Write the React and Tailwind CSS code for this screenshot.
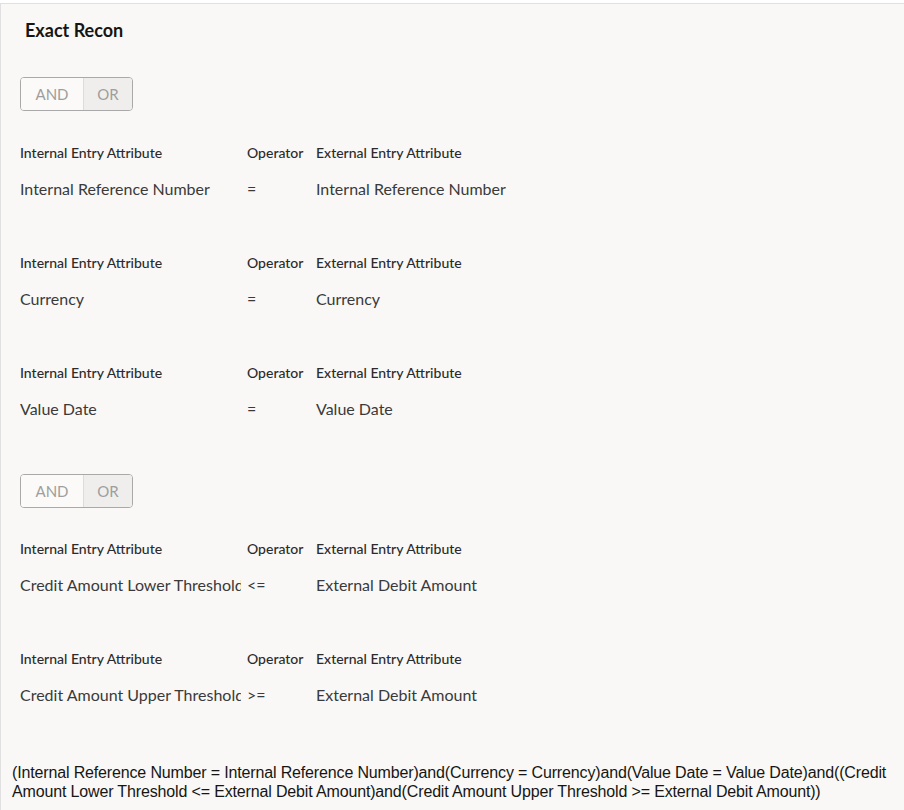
import React from "react";

const groups = [
  {
    rows: [
      ["Internal Reference Number", "=", "Internal Reference Number"],
      ["Currency", "=", "Currency"],
      ["Value Date", "=", "Value Date"],
    ],
  },
  {
    rows: [
      ["Credit Amount Lower Threshold", "<=", "External Debit Amount"],
      ["Credit Amount Upper Threshold", ">=", "External Debit Amount"],
    ],
  },
];

function Toggle() {
  return (
    <div className="flex h-[34px] w-[113px] overflow-hidden rounded-[4px] border border-[#a9a9a9] text-[15px] text-[#9e9e9e]">
      <div className="flex w-[62px] items-center justify-center bg-[#fbfaf8]">AND</div>
      <div className="flex flex-1 items-center justify-center border-l border-[#dcdcdc] bg-[#efeeec]">OR</div>
    </div>
  );
}

function Row({ row }) {
  return (
    <div className="h-[110px]">
      <div className="flex h-[22px] items-end text-[14px] font-medium text-[#2b2b2b]">
        <div className="w-[227px]">Internal Entry Attribute</div>
        <div className="w-[69px]">Operator</div>
        <div>External Entry Attribute</div>
      </div>
      <div className="mt-[14px] flex text-[16px] text-[#3a3a3a]">
        <div className="w-[221px] overflow-hidden whitespace-nowrap">{row[0]}</div>
        <div className="w-[75px] pl-[6px]">{row[1]}</div>
        <div>{row[2]}</div>
      </div>
    </div>
  );
}

export default function App() {
  return (
    <div className="min-h-[810px] bg-white pt-[3px]" style={{ fontFamily: "Lato, 'Noto Sans', sans-serif" }}>
      <div className="min-h-[807px] border-l border-t border-[#e0e0e0] bg-[#f9f8f6]">
        <div className="pl-[24px] pt-[13px] text-[18px] font-bold text-[#161513]">Exact Recon</div>
        <div className="pl-[19px]">
          <div className="mt-[33px]">
            <Toggle />
          </div>
          <div className="mt-[30px]">
            {groups[0].rows.map((r, i) => (
              <Row key={i} row={r} />
            ))}
          </div>
          <div className="mt-[3px]">
            <Toggle />
          </div>
          <div className="mt-[29px]">
            {groups[1].rows.map((r, i) => (
              <Row key={i} row={r} />
            ))}
          </div>
        </div>
        <div
          className="mt-[6px] pl-[11px] pr-[10px] text-[16px] leading-[19px] tracking-[-0.15px] text-[#161513]"
          style={{ fontFamily: "'Liberation Sans', Arial, sans-serif" }}
        >
          (Internal Reference Number = Internal Reference Number)and(Currency = Currency)and(Value Date = Value Date)and((Credit Amount Lower Threshold &lt;= External Debit Amount)and(Credit Amount Upper Threshold &gt;= External Debit Amount))
        </div>
      </div>
    </div>
  );
}
